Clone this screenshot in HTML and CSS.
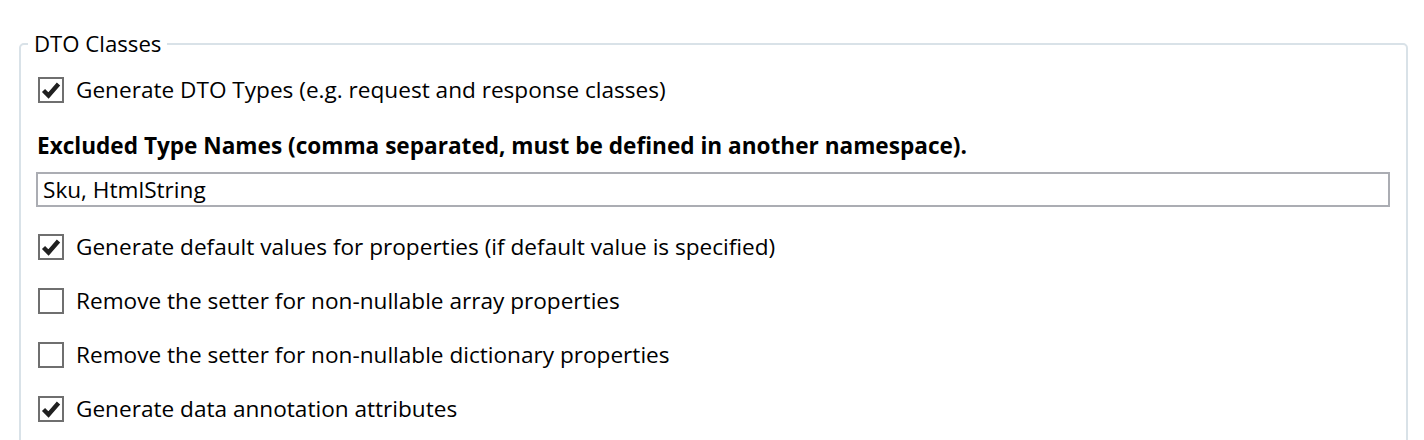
FILE: index.html
```html
<!DOCTYPE html>
<html>
<head>
<meta charset="utf-8">
<link rel="stylesheet" href="styles.css">
</head>
<body>
<fieldset class="group">
  <legend class="group-title">DTO Classes</legend>
  <div class="row">
    <span class="box checked"><svg viewBox="0 0 26 26"><path d="M5.5 13.5 L10.5 18.5 L20.5 7"/></svg></span>
    <span class="label">Generate DTO Types (e.g. request and response classes)</span>
  </div>
  <div class="field-title">Excluded Type Names (comma separated, must be defined in another namespace).</div>
  <div class="textbox">Sku, HtmlString</div>
  <div class="row first-after">
    <span class="box checked"><svg viewBox="0 0 26 26"><path d="M5.5 13.5 L10.5 18.5 L20.5 7"/></svg></span>
    <span class="label">Generate default values for properties (if default value is specified)</span>
  </div>
  <div class="row">
    <span class="box"></span>
    <span class="label">Remove the setter for non-nullable array properties</span>
  </div>
  <div class="row">
    <span class="box"></span>
    <span class="label">Remove the setter for non-nullable dictionary properties</span>
  </div>
  <div class="row">
    <span class="box checked"><svg viewBox="0 0 26 26"><path d="M5.5 13.5 L10.5 18.5 L20.5 7"/></svg></span>
    <span class="label">Generate data annotation attributes</span>
  </div>
</fieldset>
</body>
</html>
```
FILE: styles.css
```css
html, body {
  margin: 0;
  padding: 0;
  background: #ffffff;
}
body {
  font-family: "Open Sans", "Noto Sans", sans-serif;
  font-size: 22.6px;
  color: #000000;
  overflow: hidden;
  height: 440px;
}
.group {
  margin: 30px 0 0 19px;
  width: 1389px;
  box-sizing: border-box;
  border: 2px solid #d9e2e8;
  border-radius: 5px;
  padding: 0 15px 40px 15px;
  min-height: 500px;
}
.group-title {
  font-size: 22.2px;
  line-height: 28px;
  padding: 0 6px;
  margin-left: -8px;
}
.row {
  display: flex;
  align-items: center;
  height: 36px;
  margin-top: 18px;
  gap: 12px;
}
.group-title + .row {
  margin-top: 14px;
}
.row.first-after {
  margin-top: 22px;
}
.box {
  width: 26px;
  height: 26px;
  box-sizing: border-box;
  border: 2px solid #6f6f6f;
  margin-left: 2px;
  display: flex;
  align-items: center;
  justify-content: center;
  flex: none;
  background: #fff;
}
.box svg {
  width: 26px;
  height: 26px;
  flex: none;
}
.box svg path {
  fill: none;
  stroke: #202020;
  stroke-width: 4.4;
  stroke-linecap: butt;
  stroke-linejoin: miter;
}
.label {
  line-height: 28px;
  white-space: nowrap;
}
.field-title {
  margin-top: 24px;
  font-weight: bold;
  line-height: 28px;
  margin-left: 1px;
  white-space: nowrap;
}
.textbox {
  margin-top: 12px;
  height: 35px;
  box-sizing: border-box;
  border: 2px solid #abadb3;
  padding: 0 5px;
  line-height: 31px;
  width: 1354px;
}
```
